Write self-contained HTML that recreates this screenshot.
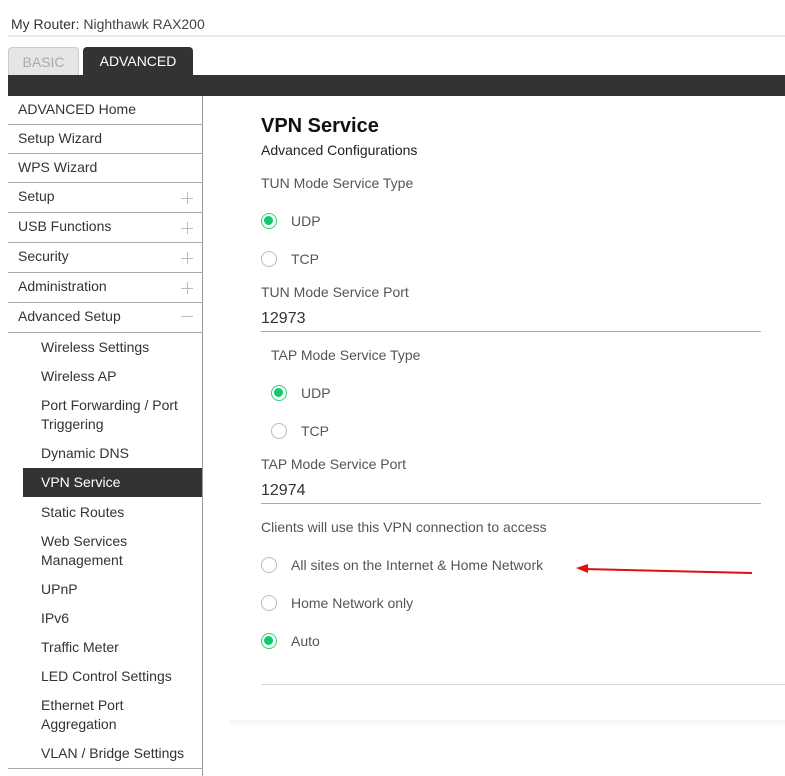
<!DOCTYPE html>
<html><head><meta charset="utf-8"><style>
*{margin:0;padding:0;box-sizing:border-box}
body{width:785px;height:776px;background:#fff;font-family:"Liberation Sans",sans-serif;font-size:14px;color:#333;position:relative;overflow:hidden}
.a{position:absolute;white-space:nowrap}
.t{line-height:18px}
.hl{position:absolute;left:8px;width:194px;height:1px;background:#aaa}
.plus{position:absolute;left:181px;width:12px;height:12px}
.plus:before{content:"";position:absolute;left:0;top:6px;width:12px;height:1px;background:#bbb}
.plus.p:after{content:"";position:absolute;left:6px;top:0;width:1px;height:12px;background:#bbb}
.r{position:absolute;width:16px;height:16px;border-radius:50%;border:1px solid #bbb;background:#fff}
.r.on{border:1.5px solid #2ecf7a}
.r.on:after{content:"";position:absolute;left:2px;top:2px;width:9px;height:9px;border-radius:50%;background:#10c96a}
.c{color:#555}
</style></head><body>
<div class="a t" style="left:11px;top:15px;color:#333">My Router: <span style="color:#444">Nighthawk RAX200</span></div>
<div class="a" style="left:8px;top:35px;width:777px;height:2px;background:#e8e8e8"></div>
<div class="a" style="left:8px;top:47px;width:71px;height:28px;background:#e6e6e6;border:1px solid #ccc;border-bottom:none;border-radius:4px 4px 0 0;color:#aaa;text-align:center;line-height:28px">BASIC</div>
<div class="a" style="left:83px;top:47px;width:110px;height:28px;background:#333;border-radius:4px 4px 0 0;color:#fff;text-align:center;line-height:29px">ADVANCED</div>
<div class="a" style="left:8px;top:75px;width:777px;height:21px;background:#333"></div>
<div class="a" style="left:202px;top:96px;width:1px;height:680px;background:#999"></div>

<div class="a t" style="left:18px;top:100px">ADVANCED Home</div>
<div class="hl" style="top:124px"></div>
<div class="a t" style="left:18px;top:129px">Setup Wizard</div>
<div class="hl" style="top:153px"></div>
<div class="a t" style="left:18px;top:158px">WPS Wizard</div>
<div class="hl" style="top:182px"></div>
<div class="a t" style="left:18px;top:187px">Setup</div><div class="plus p" style="top:192px"></div>
<div class="hl" style="top:212px"></div>
<div class="a t" style="left:18px;top:217px">USB Functions</div><div class="plus p" style="top:222px"></div>
<div class="hl" style="top:242px"></div>
<div class="a t" style="left:18px;top:247px">Security</div><div class="plus p" style="top:252px"></div>
<div class="hl" style="top:272px"></div>
<div class="a t" style="left:18px;top:277px">Administration</div><div class="plus p" style="top:282px"></div>
<div class="hl" style="top:302px"></div>
<div class="a t" style="left:18px;top:307px">Advanced Setup</div><div class="plus" style="top:310px"></div>
<div class="hl" style="top:332px"></div>

<div class="a t" style="left:41px;top:338px">Wireless Settings</div>
<div class="a t" style="left:41px;top:367px">Wireless AP</div>
<div class="a t" style="left:41px;top:396px">Port Forwarding / Port</div>
<div class="a t" style="left:41px;top:415px">Triggering</div>
<div class="a t" style="left:41px;top:444px">Dynamic DNS</div>
<div class="a" style="left:23px;top:468px;width:179px;height:29px;background:#333"></div>
<div class="a t" style="left:41px;top:473px;color:#fff">VPN Service</div>
<div class="a t" style="left:41px;top:503px">Static Routes</div>
<div class="a t" style="left:41px;top:532px">Web Services</div>
<div class="a t" style="left:41px;top:551px">Management</div>
<div class="a t" style="left:41px;top:580px">UPnP</div>
<div class="a t" style="left:41px;top:609px">IPv6</div>
<div class="a t" style="left:41px;top:638px">Traffic Meter</div>
<div class="a t" style="left:41px;top:667px">LED Control Settings</div>
<div class="a t" style="left:41px;top:696px">Ethernet Port</div>
<div class="a t" style="left:41px;top:715px">Aggregation</div>
<div class="a t" style="left:41px;top:744px">VLAN / Bridge Settings</div>
<div class="hl" style="top:768px"></div>

<div class="a" style="left:261px;top:115px;font-size:20px;font-weight:bold;color:#111">VPN Service</div>
<div class="a t" style="left:261px;top:141px;color:#222">Advanced Configurations</div>
<div class="a t c" style="left:261px;top:174px">TUN Mode Service Type</div>
<div class="r on" style="left:261px;top:213px"></div><div class="a t c" style="left:291px;top:212px">UDP</div>
<div class="r" style="left:261px;top:251px"></div><div class="a t c" style="left:291px;top:250px">TCP</div>
<div class="a t c" style="left:261px;top:283px">TUN Mode Service Port</div>
<div class="a" style="left:261px;top:310px;font-size:16px;color:#333">12973</div>
<div class="a" style="left:261px;top:331px;width:500px;height:1px;background:#aaa"></div>
<div class="a t c" style="left:271px;top:346px">TAP Mode Service Type</div>
<div class="r on" style="left:271px;top:385px"></div><div class="a t c" style="left:301px;top:384px">UDP</div>
<div class="r" style="left:271px;top:423px"></div><div class="a t c" style="left:301px;top:422px">TCP</div>
<div class="a t c" style="left:261px;top:455px">TAP Mode Service Port</div>
<div class="a" style="left:261px;top:482px;font-size:16px;color:#333">12974</div>
<div class="a" style="left:261px;top:503px;width:500px;height:1px;background:#aaa"></div>
<div class="a t c" style="left:261px;top:518px">Clients will use this VPN connection to access</div>
<div class="r" style="left:261px;top:557px"></div><div class="a t c" style="left:291px;top:556px">All sites on the Internet &amp; Home Network</div>
<div class="r" style="left:261px;top:595px"></div><div class="a t c" style="left:291px;top:594px">Home Network only</div>
<div class="r on" style="left:261px;top:633px"></div><div class="a t c" style="left:291px;top:632px">Auto</div>
<div class="a" style="left:261px;top:684px;width:524px;height:1px;background:#d5d9de"></div>
<div class="a" style="left:230px;top:720px;width:555px;height:6px;background:linear-gradient(#f4f4f4,#fff)"></div>
<svg class="a" style="left:570px;top:560px" width="190" height="20"><line x1="14" y1="9" x2="182" y2="13" stroke="#e01010" stroke-width="2"/><polygon points="6,8 18,4 18,13" fill="#e01010"/></svg>
</body></html>
